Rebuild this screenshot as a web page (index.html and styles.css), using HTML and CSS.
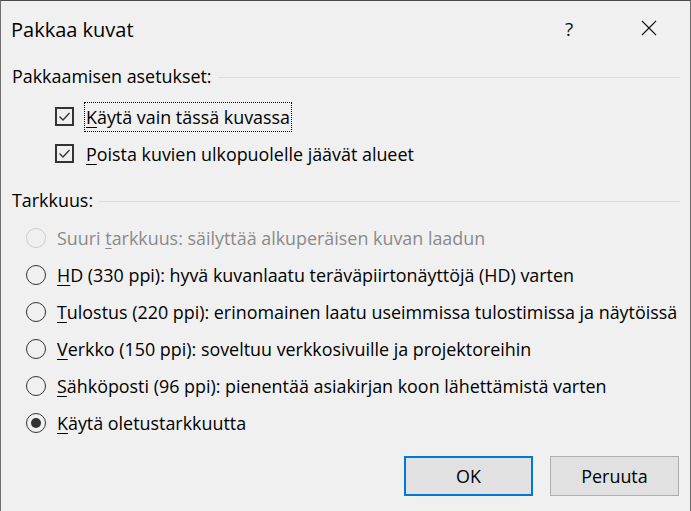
FILE: index.html
```html
<!DOCTYPE html>
<html lang="fi">
<head>
<meta charset="utf-8">
<title>Pakkaa kuvat</title>
<link rel="stylesheet" href="styles.css">
</head>
<body>
<div class="dialog">
  <header class="titlebar">
    <span class="title">Pakkaa kuvat</span>
    <span class="help">?</span>
    <svg class="close" width="16" height="16" viewBox="0 0 16 16"><path d="M1 1 L15 15 M15 1 L1 15" stroke="#111" stroke-width="1.1" fill="none"/></svg>
  </header>

  <section class="group">
    <div class="group-head"><span>Pakkaamisen asetukset:</span><i class="rule"></i></div>
    <div class="checks">
      <label class="row">
        <span class="box"><svg width="19" height="19" viewBox="0 0 19 19"><path d="M4.5 9.5 L8 13 L14.5 6" stroke="#333" stroke-width="1.3" fill="none"/></svg></span>
        <span class="label focus"><u>K</u>äytä vain tässä kuvassa</span>
      </label>
      <label class="row">
        <span class="box"><svg width="19" height="19" viewBox="0 0 19 19"><path d="M4.5 9.5 L8 13 L14.5 6" stroke="#333" stroke-width="1.3" fill="none"/></svg></span>
        <span class="label"><u>P</u>oista kuvien ulkopuolelle jäävät alueet</span>
      </label>
    </div>
  </section>

  <section class="group second">
    <div class="group-head"><span>Tarkkuus:</span><i class="rule"></i></div>
    <div class="radios">
      <label class="row disabled"><span class="radio"></span><span class="label">Suuri <u>t</u>arkkuus: säilyttää alkuperäisen kuvan laadun</span></label>
      <label class="row"><span class="radio"></span><span class="label"><u>H</u>D (330 ppi): hyvä kuvanlaatu teräväpiirtonäyttöjä (HD) varten</span></label>
      <label class="row"><span class="radio"></span><span class="label"><u>T</u>ulostus (220 ppi): erinomainen laatu useimmissa tulostimissa ja näytöissä</span></label>
      <label class="row"><span class="radio"></span><span class="label"><u>V</u>erkko (150 ppi): soveltuu verkkosivuille ja projektoreihin</span></label>
      <label class="row"><span class="radio"></span><span class="label"><u>S</u>ähköposti (96 ppi): pienentää asiakirjan koon lähettämistä varten</span></label>
      <label class="row"><span class="radio checked"></span><span class="label"><u>K</u>äytä oletustarkkuutta</span></label>
    </div>
  </section>

  <footer class="buttons">
    <button class="btn default">OK</button>
    <button class="btn">Peruuta</button>
  </footer>
</div>
</body>
</html>
```
FILE: styles.css
```css
html, body {
  margin: 0;
  padding: 0;
  background: #f0f0f0;
}

.dialog {
  width: 691px;
  height: 511px;
  box-sizing: border-box;
  background: #f0f0f0;
  border-left: 1px solid #6e6e6e;
  border-right: 1px solid #6e6e6e;
  border-top: 1px solid #4a4a4a;
  font-family: "Open Sans", "Noto Sans", sans-serif;
  font-size: 17.9px;
  color: #000;
  overflow: hidden;
}

.titlebar {
  height: 55px;
  display: flex;
  align-items: center;
  padding-left: 10px;
}

.title {
  font-size: 20px;
  flex: 1;
  margin-top: 1px;
}

.help {
  font-size: 19px;
  width: 12px;
  margin-right: 64px;
  color: #111;
}

.close {
  margin-right: 33px;
  margin-top: -1px;
}

.group {
  padding-top: 8px;
}

.group.second {
  padding-top: 16px;
}

.group-head {
  height: 24px;
  display: flex;
  align-items: center;
  padding-left: 11px;
  padding-right: 10px;
}

.rule {
  flex: 1;
  height: 1px;
  background: #dcdcdc;
  margin-left: 6px;
  margin-top: 2px;
}

.checks {
  padding-top: 10px;
  padding-left: 54px;
}

.radios {
  padding-top: 7px;
  padding-left: 25px;
}

.row {
  height: 37px;
  display: flex;
  align-items: center;
  white-space: nowrap;
}

.box {
  width: 19px;
  height: 19px;
  box-sizing: border-box;
  border: 2px solid #333;
  position: relative;
  flex: none;
}

.box svg {
  position: absolute;
  left: -2px;
  top: -2px;
}

.checks .label {
  margin-left: 10px;
  padding: 3px 1px;
  line-height: 22px;
  border: 1px dotted transparent;
}

.checks .label.focus {
  border-color: #000;
}

.radio {
  width: 20px;
  height: 20px;
  box-sizing: border-box;
  border: 1.5px solid #333;
  border-radius: 50%;
  flex: none;
  display: flex;
  align-items: center;
  justify-content: center;
}

.radio.checked::after {
  content: "";
  width: 10px;
  height: 10px;
  border-radius: 50%;
  background: #333;
}

.radios .label {
  margin-left: 11px;
}

.row.disabled .radio {
  border-color: #cccccc;
}

.row.disabled .label {
  color: #8a8a8a;
}

u {
  text-decoration-thickness: 1px;
  text-underline-offset: 3px;
}

.buttons {
  display: flex;
  justify-content: flex-end;
  gap: 17px;
  padding-top: 15px;
  padding-right: 11px;
}

.btn {
  width: 129px;
  height: 40px;
  box-sizing: border-box;
  border: 1px solid #adadad;
  background: #e1e1e1;
  font-family: "Open Sans", "Noto Sans", sans-serif;
  font-size: 17.9px;
  color: #000;
  padding: 0;
}

.btn.default {
  border: 2px solid #0078d7;
}
```
